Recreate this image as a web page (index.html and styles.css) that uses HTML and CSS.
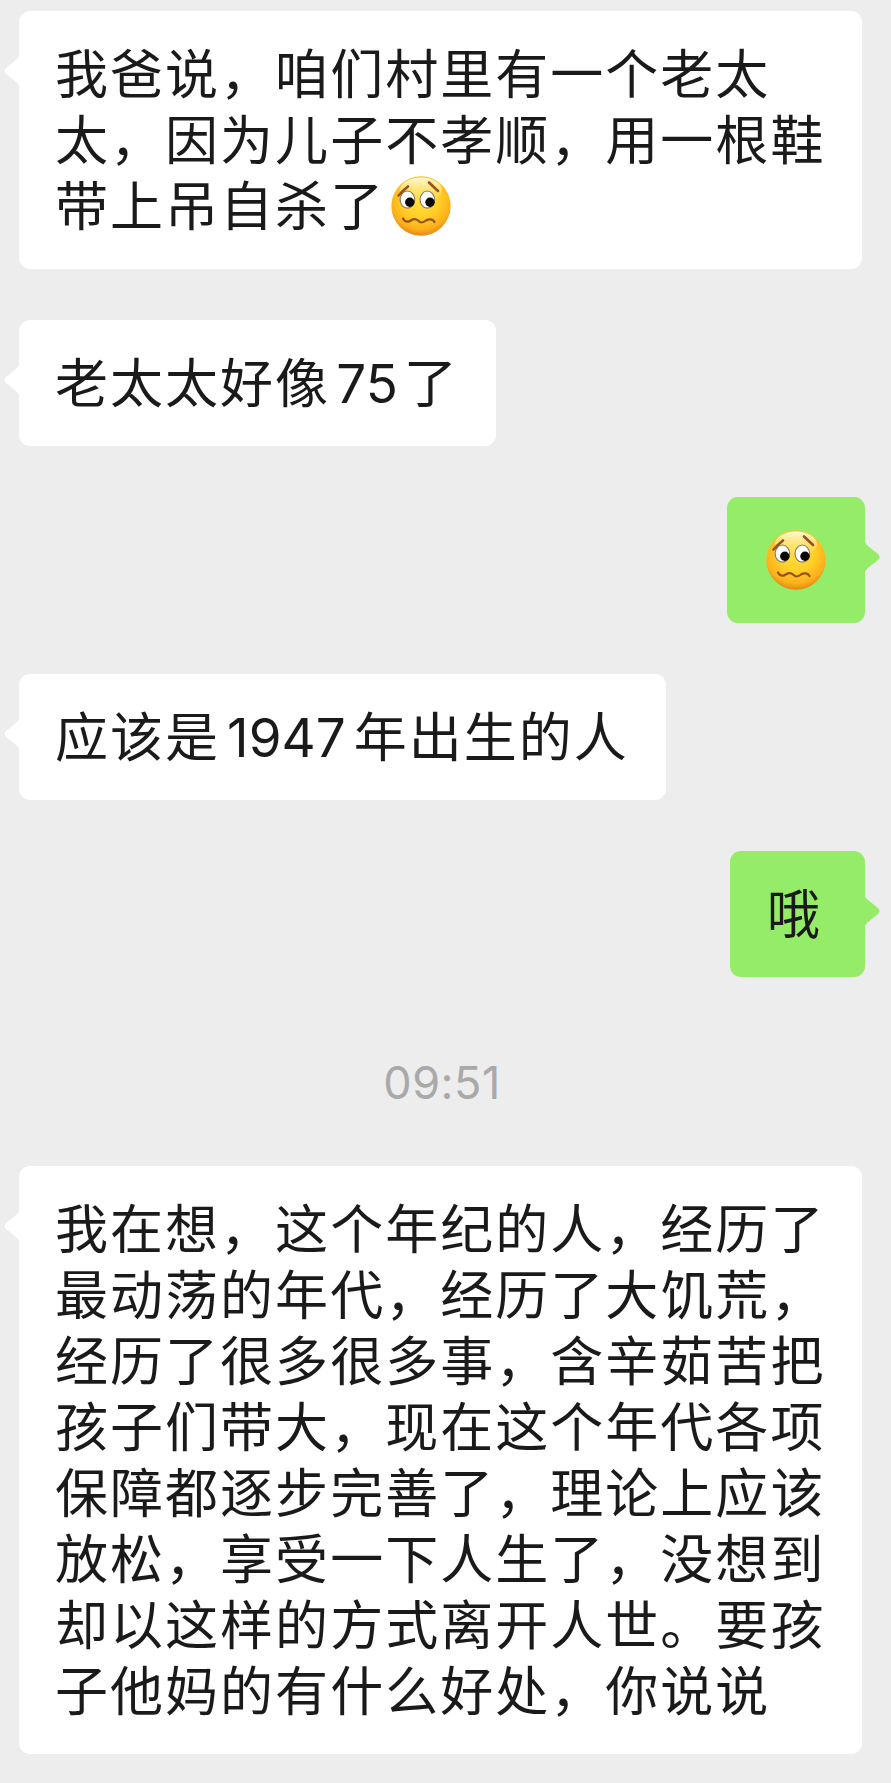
FILE: index.html
```
<!DOCTYPE html>
<html lang="zh-CN">

<head>
    <meta charset="UTF-8">
    <meta name="viewport" content="width=device-width, initial-scale=1.0">
    <title>Chat</title>
    <link rel="stylesheet" href="styles.css">
</head>

<body>

    <!-- Worried face, reused by the messages -->
    <svg class="defs" width="0" height="0" aria-hidden="true">
        <defs>
            <radialGradient id="face" cx="50%" cy="38%" r="63%">
                <stop offset="0" stop-color="#ffe040" />
                <stop offset=".5" stop-color="#ffce27" />
                <stop offset=".82" stop-color="#fdb01a" />
                <stop offset="1" stop-color="#e08416" />
            </radialGradient>
            <linearGradient id="shine" x1="0" y1="0" x2="0" y2="1">
                <stop offset="0" stop-color="#fffbe0" stop-opacity=".95" />
                <stop offset="1" stop-color="#fff3a0" stop-opacity="0" />
            </linearGradient>
        </defs>
        <symbol id="worried" viewBox="0 0 60 60">
            <circle cx="30" cy="30" r="29.7" fill="url(#face)" />
            <ellipse cx="30" cy="14" rx="21" ry="12.5" fill="url(#shine)" />
            <ellipse cx="16.4" cy="23.6" rx="7.3" ry="8.6" fill="#fff" stroke="#8f7c62" stroke-width="1.2" />
            <ellipse cx="36.3" cy="23.6" rx="7.3" ry="8.6" fill="#fff" stroke="#8f7c62" stroke-width="1.2" />
            <circle cx="18.8" cy="26.3" r="4.7" fill="#080808" />
            <circle cx="39" cy="26.3" r="4.7" fill="#080808" />
            <g fill="none" stroke="#93531a" stroke-linecap="round" stroke-linejoin="round">
                <path d="M7.5 19.5Q12 14.5 17 10.5" stroke-width="2.6" />
                <path d="M38 6.5L47 15" stroke-width="2.6" />
                <path d="M12 42.5Q14 46.5 18 45.5C22 43 24 42 27 44.5C30 47.5 32 47 35 44.5C38 42.5 42 43 43.5 46" stroke-width="2.2" />
            </g>
        </symbol>
    </svg>

    <main class="chat">

        <div class="message">我爸说，咱们村里有一个老太太，因为儿子不孝顺，用一根鞋带上吊自杀了<svg class="emoji" role="img" aria-label="worried"><use href="#worried" /></svg></div>

        <div class="message short">老太太好像<span class="number age">75</span>了</div>

        <div class="message mine"><svg class="emoji" role="img" aria-label="worried"><use href="#worried" /></svg></div>

        <div class="message short">应该是<span class="number">1947</span>年出生的人</div>

        <div class="message mine text">哦</div>

        <time class="time">09:51</time>

        <div class="message">我在想，这个年纪的人，经历了最动荡的年代，经历了大饥荒，经历了很多很多事，含辛茹苦把孩子们带大，现在这个年代各项保障都逐步完善了，理论上应该放松，享受一下人生了，没想到却以这样的方式离开人世。要孩子他妈的有什么好处，你说说</div>

    </main>

</body>

</html>
```
FILE: styles.css
```
/*      Variables       */
:root {
    --bg-color: #ededed;
    --bubble-color: #fff;
    --mine-color: #95ec69;
    --text-color: #1a1a1a;
    --time-color: #a9a9a9;
}

/*      Reset Styles    */
html {
    box-sizing: border-box;
    font-family: "Noto Sans CJK SC", sans-serif;
}

body {
    margin: 0;
    background-color: var(--bg-color);
    color: var(--text-color);
}

*,
*::before,
*::after {
    box-sizing: inherit;
}

.defs {
    position: absolute;
}

/*      Chat        */
.chat {
    min-height: 1783px;
    padding: 11px 26px 29px 19px;

    display: flex;
    flex-direction: column;
    align-items: flex-start;
    gap: 51px;
}

.message {
    position: relative;
    max-width: 843px;
    padding: 27px 34px 33px 36px;
    border-radius: 11px;
    background-color: var(--bubble-color);
    font-size: 53px;
    line-height: 66px;
    letter-spacing: 2.03px;
}

.short {
    padding-right: 37px;
}

/* little arrow on the side of the bubble */
.message::before {
    content: "";
    position: absolute;
    top: 42px;
    left: -15px;
    width: 16px;
    height: 36px;
    background-color: inherit;
    clip-path: path("M16 0C16 3 14 5 12 7L2 15Q-1 18 2 21L12 29C14 31 16 33 16 36Z");
}

.mine {
    align-self: flex-end;
    padding: 27px 39px 33px;
    background-color: var(--mine-color);
}

.text {
    padding: 27px 43px 33px 37px;
}

.mine::before {
    left: auto;
    right: -15px;
    transform: scaleX(-1);
}

.emoji {
    display: inline-block;
    width: 60px;
    height: 60px;
    margin: -10px 0 -10px 6px;
    vertical-align: 0;
}

.mine .emoji {
    display: block;
    margin: 6px 0 0;
}

.number {
    margin: 0 8px 0 7px;
    font-family: Inter, sans-serif;
    line-height: 1;
    letter-spacing: 0;
}

.age {
    margin: 0 6px;
}

.time {
    align-self: center;
    height: 87px;
    padding-top: 28px;
    font-family: Inter, sans-serif;
    font-size: 45px;
    line-height: 54px;
    letter-spacing: .5px;
    color: var(--time-color);
}
```
